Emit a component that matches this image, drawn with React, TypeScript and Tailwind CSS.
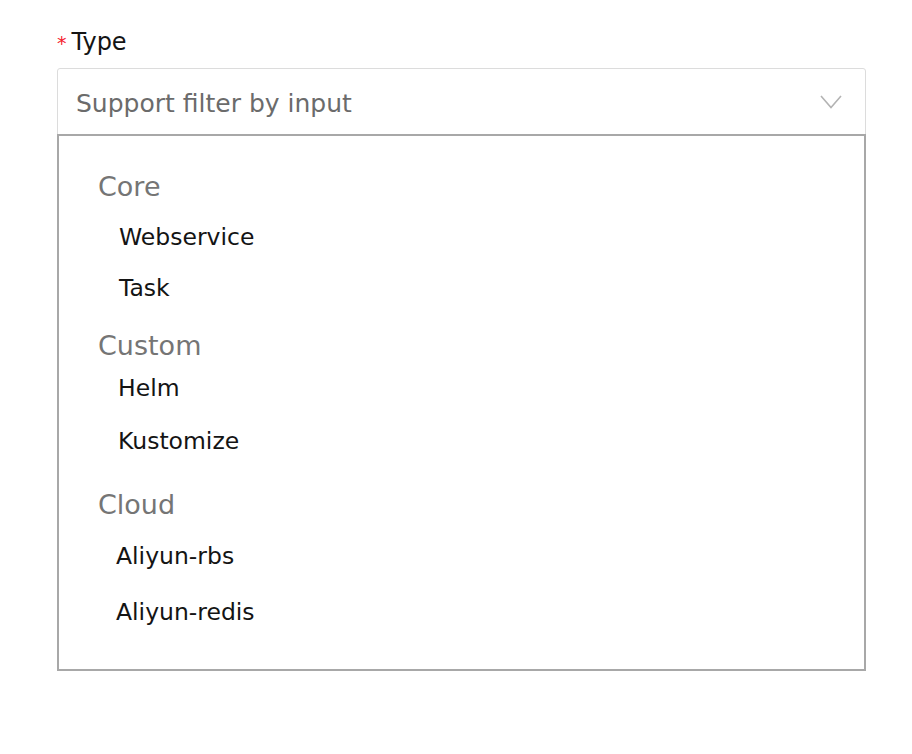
type Row = { text: string; kind: 'group' | 'item'; mt: string; pl: string };

// margins are tuned per row so every line lands where the screenshot has it
const rows: Row[] = [
  { text: 'Core', kind: 'group', mt: 'mt-0', pl: 'pl-[39px]' },
  { text: 'Webservice', kind: 'item', mt: 'mt-[10px]', pl: 'pl-[60px]' },
  { text: 'Task', kind: 'item', mt: 'mt-[11px]', pl: 'pl-[60px]' },
  { text: 'Custom', kind: 'group', mt: 'mt-[18px]', pl: 'pl-[39px]' },
  { text: 'Helm', kind: 'item', mt: 'mt-[2px]', pl: 'pl-[59px]' },
  { text: 'Kustomize', kind: 'item', mt: 'mt-[13px]', pl: 'pl-[59px]' },
  { text: 'Cloud', kind: 'group', mt: 'mt-[24px]', pl: 'pl-[39px]' },
  { text: 'Aliyun-rbs', kind: 'item', mt: 'mt-[11px]', pl: 'pl-[57px]' },
  { text: 'Aliyun-redis', kind: 'item', mt: 'mt-[16px]', pl: 'pl-[57px]' },
];

export default function App() {
  return (
    <div
      className="min-h-screen w-[912px] bg-white pl-[57px] pt-[28px]"
      style={{ fontFamily: '"DejaVu Sans", sans-serif' }}
    >
      {/* Label */}
      <div className="flex h-[28px] items-center">
        <span className="mr-[5px] mt-[2px] text-[19px] leading-[19px] text-[#f5222d]">*</span>
        <span className="text-[24px] leading-[28px] text-[#141414]">Type</span>
      </div>

      <div className="mt-3 w-[809px]">
        {/* Select input */}
        <div className="flex h-[67px] items-center justify-between rounded-t-[3px] border border-[#dcdcdc] bg-white pl-[18px] pr-[23px] pt-1">
          <span className="text-[25px] leading-[40px] text-[#6b6b6b]">Support filter by input</span>
          <svg className="-mt-1" width="22" height="14" viewBox="0 0 22 14" fill="none">
            <polyline points="1,1 11,12.5 21,1" stroke="#b3b3b3" strokeWidth="1.6" />
          </svg>
        </div>

        {/* Dropdown */}
        <div className="-mt-px h-[537px] border-2 border-[#a8a8a8] bg-white pt-[31px]">
          {rows.map((r) => (
            <div
              key={r.text}
              className={
                r.kind === 'group'
                  ? `h-10 text-[27px] leading-10 text-[#757575] ${r.mt} ${r.pl}`
                  : `h-10 text-[23.5px] leading-10 text-[#141414] ${r.mt} ${r.pl}`
              }
            >
              {r.text}
            </div>
          ))}
        </div>
      </div>
    </div>
  );
}
